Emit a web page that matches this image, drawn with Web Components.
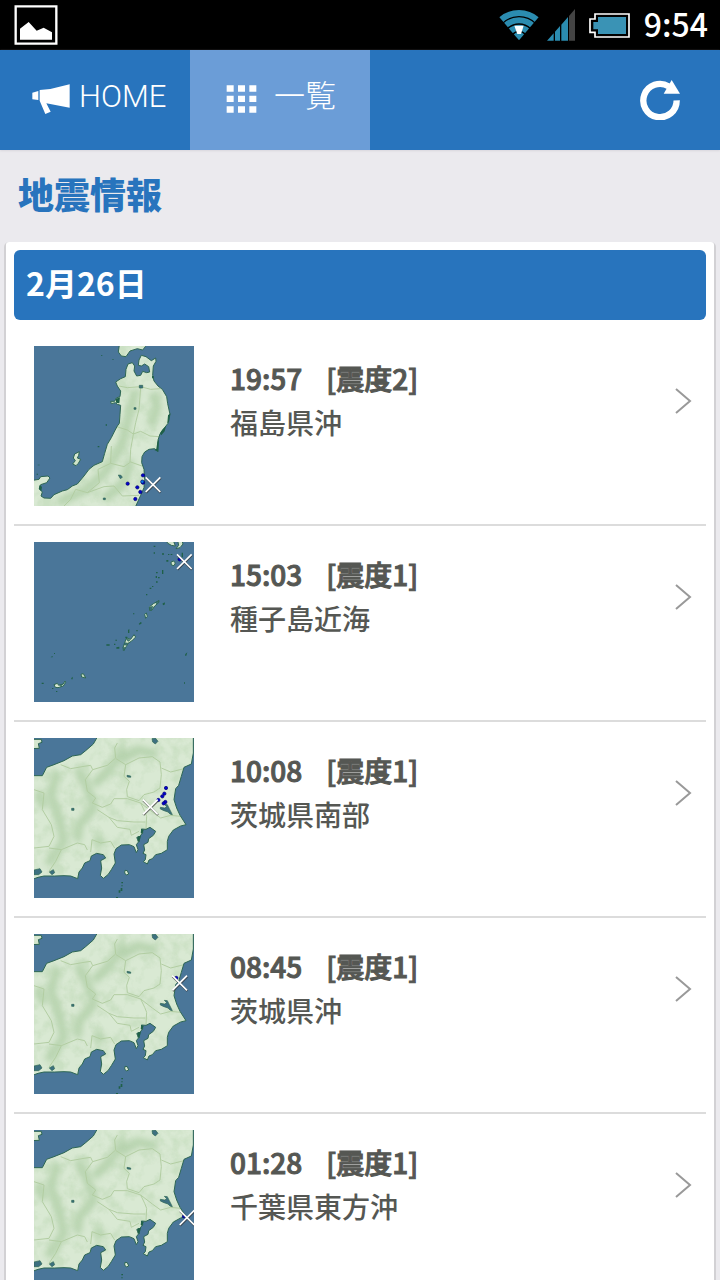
<!DOCTYPE html>
<html lang="ja">
  <head>
    <meta charset="UTF-8" />
    <meta name="viewport" content="width=device-width, initial-scale=1" />
    <title>地震情報</title>
    <style>
      body {
        margin: 0;
        height: 100vh;
        display: flex;
        flex-direction: column;
        background: #ebeaee;
        font-family: "Noto Sans CJK JP", sans-serif;
        color: #555753;
      }
      main {
        flex: 1;
        min-height: 0;
        overflow-y: auto;
        scrollbar-width: none;
      }
      h1 {
        margin: 0;
        padding: 0 18px 6px;
        font-size: 36px;
        line-height: 86px;
        font-weight: 900;
        color: #2874bd;
      }
    </style>
  </head>
  <body>
    <status-bar>9:54</status-bar>
    <tool-bar>
      <nav-tab href="#home" icon="horn">HOME</nav-tab>
      <nav-tab href="#list" icon="grid" active>一覧</nav-tab>
    </tool-bar>
    <main>
      <h1>地震情報</h1>
      <quake-day id="day">
        <span slot="date">2月26日</span>
      </quake-day>
    </main>

    <template id="status-bar-template">
      <style>
        :host {
          display: flex;
          align-items: center;
          justify-content: space-between;
          flex: none;
          height: 50px;
          padding: 0 12px 0 14px;
          background: #000;
          color: #fff;
          font-size: 32px;
          line-height: 48px;
          font-weight: 500;
        }
        div {
          display: flex;
          align-items: center;
          gap: 14px;
        }
        .signals {
          gap: 8px;
        }
        .clock {
          padding-bottom: 4px;
        }
        svg {
          display: block;
        }
      </style>
      <svg width="44" height="40" viewBox="42 15 132 120">
        <path fill="none" stroke="#fff" stroke-width="7" d="M47 19H169V131H47Z" />
        <path fill="#fff" d="M60 119V86L86 66L110 92L131 83L156 97V119Z" />
      </svg>
      <div>
        <div class="signals">
          <svg width="40" height="32" viewBox="58 27 120 96">
            <clipPath id="fan"><path d="M118 121L56 48V20H180V48Z" /></clipPath>
            <g clip-path="url(#fan)" fill="none" stroke="#2b8cb0" stroke-width="18">
              <circle cx="118" cy="121" r="82" />
              <circle cx="118" cy="121" r="60" />
              <circle cx="118" cy="121" r="38" />
              <circle cx="118" cy="121" r="12" stroke-width="24" />
            </g>
            <path fill="#fff" d="M104 77H132L124 102H113Z" />
          </svg>
          <svg width="28" height="32" viewBox="204 27 84 96">
            <path fill="#2b8cb0" d="M204 122L224 100V122ZM228 122V95L243 78V122ZM247 122V74L267 51V122Z" />
            <path fill="#444" d="M270 122V48L288 27V122Z" />
          </svg>
        </div>
        <svg width="41" height="25" viewBox="327 36 123 75">
          <path fill="none" stroke="#fff" stroke-width="5" d="M345 39H447V108H345V94H330V54H345Z" />
          <path fill="#3a93b5" d="M354 48H438V99H354V85H340V63H354Z" />
        </svg>
        <span class="clock"><slot></slot></span>
      </div>
    </template>

    <template id="tool-bar-template">
      <style>
        :host {
          display: flex;
          flex: none;
          height: 100px;
          background: #2874bd;
          box-shadow: 0 1px 2px #d8d6dc;
        }
        nav {
          display: flex;
          flex: 1;
        }
        button {
          width: 120px;
          padding: 0;
          border: 0;
          background: none;
        }
        svg {
          display: block;
          margin: auto;
        }
      </style>
      <nav><slot></slot></nav>
      <button type="button" aria-label="更新">
        <svg width="40" height="40" viewBox="480 237 120 120">
          <path fill="none" stroke="#fff" stroke-width="19" d="M590 298A50 50 0 1 1 566 256" />
          <path fill="#fff" d="M575 237L600 278H551Z" />
        </svg>
      </button>
    </template>

    <template id="nav-tab-template">
      <style>
        :host {
          display: block;
        }
        a {
          box-sizing: border-box;
          display: flex;
          align-items: center;
          height: 100%;
          width: 190px;
          padding: 0 0 2px 31px;
          gap: 8px;
          color: #fff;
          text-decoration: none;
          font-family: Roboto, "Noto Sans CJK JP", sans-serif;
          font-size: 31px;
          font-weight: 300;
          line-height: 40px;
        }
        :host([active]) a {
          width: 180px;
          padding-left: 36px;
          gap: 16px;
          background: #6b9dd7;
        }
        #text {
          padding-bottom: 4px;
        }
      </style>
      <a><span id="icon"></span><span id="text"><slot></slot></span></a>
    </template>

    <template id="quake-day-template">
      <style>
        :host {
          display: block;
          margin: 0 6px;
          padding: 8px 8px 0;
          background: #fff;
          border-radius: 3px;
          box-shadow: 0 2px 0 2px #d2d1d4;
        }
        h2 {
          margin: 0 0 10px;
          padding: 0 12px 6px;
          border-radius: 6px;
          background: #2874bd;
          color: #fff;
          font-size: 32px;
          line-height: 64px;
          font-weight: 700;
        }
      </style>
      <h2><slot name="date"></slot></h2>
      <slot></slot>
    </template>

    <template id="quake-item-template">
      <style>
        :host {
          display: block;
          border-bottom: 2px solid #dcdcdc;
        }
        a {
          display: flex;
          align-items: flex-start;
          gap: 36px;
          padding: 16px 14px 18px 20px;
          color: inherit;
          text-decoration: none;
          font-size: 28px;
          line-height: 44px;
        }
        .text {
          flex: 1;
          padding-top: 10px;
        }
        .head {
          display: flex;
          gap: 24px;
          -webkit-text-stroke: 1px;
          font-weight: 500;
        }
        .place {
          font-weight: 500;
        }
        svg {
          display: block;
          padding-top: 42px;
        }
      </style>
      <a href="#detail">
        <slot name="map"></slot>
        <div class="text">
          <div class="head">
            <slot name="time"></slot>
            <span>[<slot name="scale"></slot>]</span>
          </div>
          <div class="place"><slot name="place"></slot></div>
        </div>
        <svg width="17" height="26" viewBox="0 0 17 26">
          <path fill="none" stroke="#999" stroke-width="2" d="M1 1L15 13L1 25" />
        </svg>
      </a>
    </template>

    <template id="quake-map-template">
      <style>
        :host {
          display: block;
          flex: none;
          width: 160px;
          height: 160px;
        }
        svg {
          display: block;
        }
      </style>
      <svg width="160" height="160" viewBox="30 30 480 480">
        <filter id="soft" x="-20%" y="-20%" width="140%" height="140%">
          <feGaussianBlur stdDeviation="9" />
        </filter>
        <filter id="grain" x="0" y="0" width="100%" height="100%">
          <feTurbulence type="fractalNoise" baseFrequency="0.025" numOctaves="4" seed="5" />
          <feColorMatrix values="0 0 0 0 .5  0 0 0 0 .68  0 0 0 0 .45  0 0 0 3 -1.35" />
        </filter>
        <rect x="30" y="30" width="480" height="480" fill="#4a7699" />
        <g id="region"></g>
        <g id="dots" fill="#0000d0" stroke="#00006a" stroke-width="2"></g>
        <g id="cross" fill="none"></g>
      </svg>
    </template>

    <script>
      const icons = {
        horn: `<svg width="40" height="32" viewBox="92 252 120 96" style="display:block">
          <path fill="#fff" d="M96 281L114 276V303L96 301ZM118 273L150 270L208 256V326L138 313L151 338L135 345L118 305Z"/></svg>`,
        grid: `<svg width="32" height="30" viewBox="680 254 96 90" style="display:block">
          <path fill="#fff" d="M682 258h21v19h-21zM716 258h21v19h-21zM750 258h21v19h-21zM682 289h21v19h-21zM716 289h21v19h-21zM750 289h21v19h-21zM682 321h21v19h-21zM716 321h21v19h-21zM750 321h21v19h-21z"/></svg>`,
      };

      // land: coastline, hills: darker relief, lines: prefecture borders, water: lakes
      const regions = {
        tohoku: {
          land: `M20 520V434L45 430L50 422L72 420L78 426L68 440L50 446L46 458L55 468L51 480L60 486L80 487L90 476L115 465L130 461L145 450L160 444L180 420L195 400L210 388L235 377L242 352L250 325L262 305L272 285L280 270L286 262L288 235L290 208L280 205L274 200L262 203L260 196L272 196L277 186L288 182L290 165L280 150L275 138L290 128L304 122L306 100L312 84L325 80L332 90L330 105L338 120L350 118L356 106L368 110L377 108L374 92L362 84L352 90L343 88L345 72L352 58L366 62L382 74L395 66L396 76L388 90L386 118L390 135L402 150L415 160L428 182L431 203L438 235L432 262L418 280L408 294L402 312L401 346L392 338L375 340L362 348L354 362L353 380L360 400L362 430L360 455L350 478L331 520Z
            M287 20L283 48L292 60L306 62L318 45L340 38L356 42L364 32L370 20Z
            M152 354L166 347L164 358L160 366L170 370L163 382L156 389L146 384L154 374L148 366Z`,
          hills: "M335 160L312 250L292 330L250 400L190 460L100 500M385 170L400 210L380 270M320 370L300 440L240 490",
          lines: "M285 150L310 155L350 152L380 160L408 158M350 155L345 220L335 260L328 295L320 340L318 378M278 272L310 282L328 294L350 286L378 300L405 302M262 330L260 382L300 392L320 378L354 390M260 382L222 400L226 440L190 470L155 460L140 490L120 510M190 470L240 452L270 450L295 480L345 478",
          water: "M346 148h10v8h-10zM330 215h6v5h-6zM283 417l8 1l4 6l-6 4zM238 486h6v5h-6z",
          specks: "M231 57h4v2h-4zM265 70h4v2h-4zM245 265h4v4h-4zM221 330h5v4h-5zM41 386h6v2h-6zM38 413h4v3h-4zM384 120h5v7h-5zM276 188l12 -4l-2 18l-10 -2zM400 318l5 -8l-2 38l-12 -6l6 -4zM408 292l6 -10l12 -12l-4 16l-10 12zM432 238l7 -6l-4 26l-5 4zM46 448l8 4l-2 14l-7 -6z",
        },
        nansei: {
          land: `M427 20L430 33L442 40L454 42L446 20ZM460 20L464 40L456 50L468 47L477 36L472 20Z
            M441 90L449 87L454 93L450 101L442 99Z
            M376 225L388 215L405 206L404 212L392 222L384 234L377 235Z
            M362 247L367 243L370 253L365 259ZM300 355L297 347L302 332L308 318L320 322L330 308L335 315L323 327L312 334L307 343Z
            M171 427L178 425L185 438L173 435ZM90 458L100 454L104 460L118 456L123 447L125 451L118 462L102 467L94 466Z`,
          hills: "",
          lines: "",
          water: "M378 226l8 -3l-3 12h-6zM396 210l9 -4l-2 7l-6 3zM298 346l5 1l-2 8h-4zM302 332l10 2l-5 5h-6zM308 322l10 2l-6 4zM108 458l8 -1l-6 6z",
          specks: `M389 41h5v4h-5zM389 61h4v4h-4zM414 64h6v4h-6zM432 66h4v3h-4zM440 66h5v3h-5zM473 62h4v14h-4zM427 84h6v5h-6zM414 114h4v12h-4zM396 120h5v4h-5zM402 135h5v4h-5zM395 132h4v6h-4zM396 148h5v4h-5zM384 162h4v3h-4zM377 167h5v4h-5zM366 186h4v4h-4zM415 215l7 -4l1 6l-5 3zM327 244h4v3h-4zM344 276l6 -6l4 3l-7 5zM337 294h4v4h-4zM312 294l4 -3v12h-4zM304 314h6v5h-6zM274 323h5v3h-5zM247 337h10v4h-10zM270 335h4v4h-4zM277 346l9 -2v6h-9zM90 363h3v3h-3zM80 375l6 -3v4h-5zM53 452h6v4h-6zM142 438l4 -4v8h-4zM96 477h4v3h-4zM84 468h4v3h-4zM484 366l6 -5l-3 10h-4zM480 451h3v4h-3z`,
        },
        kanto: {
          land: `M224 20H508V75L502 108L480 118L472 145L464 172L455 182L450 215L458 240L468 262L486 290L470 294L448 306L434 325L430 340V365L412 376L395 380L385 392L375 396L370 408L358 401L364 395L366 380L357 376L362 366L359 350L372 343L374 332L388 322L395 310L378 298L366 304L352 303L356 314L348 325L338 329L345 340L337 350L342 365L337 374L330 356L316 350L292 351L276 362L270 378L274 405L262 425L252 440L238 451L229 442L233 420L230 398L245 390L238 380L218 376L202 384L198 398L182 405L175 420L165 432L161 452L140 444L120 443L92 444L60 444L42 448L20 456V143L55 143L68 118L90 110L120 98L145 84L170 80L185 68L208 48Z
            M20 34L52 34L54 43L43 47L46 61L20 62ZM303 427L310 428L314 438L307 441L302 435Z`,
          hills: "M100 130L80 200L105 270L120 340L70 410M160 120L190 180L210 240L165 290L160 340M300 60L260 120L210 170M290 100L340 65L400 80M40 190L60 240M215 330L240 350",
          lines: "M110 110L140 122L180 115L200 112L206 125L250 112L275 90L272 60L280 45M276 92L305 110L345 90L385 86L408 102L412 140L408 180L390 192L360 200L345 218L310 206L308 184L316 160L300 145L305 110M412 120L440 132L480 122M206 125L184 155L190 190L215 210L205 225L235 238L260 228L270 212L310 212L350 225L362 250L368 265L366 302M350 225L385 252L410 270L440 262L470 265M220 245L255 268L280 278L330 282L364 282M255 268L280 298L318 304L322 322L345 310M30 185L60 195L55 245L82 290L90 325L75 355L30 360M75 360L112 365L95 400L75 430M112 365L160 345L182 350L190 366M200 372L204 335L230 345L260 340L272 360",
          water: "M384 32L394 30L402 40L394 48L386 42ZM309 142L320 144L320 148L310 147ZM143 241h7v6h-7zM409 238L422 240L428 236L421 229L430 230L436 242L445 260L438 258L432 252L420 248L409 243ZM30 426L48 422L54 432L44 440L30 440ZM76 432L88 425L92 434L84 440Z",
          specks: "M292 462h5v4h-5zM292 472h4v3h-4zM290 480h5v9h-5zM284 487h5v7h-5zM276 507h6v3h-6zM341 325l10 -1l-5 18l-6 -2zM352 303l7 3l-4 12l-5 -4z",
        },
      };

      const quakes = [
        { time: "19:57", scale: "震度2", place: "福島県沖", region: "tohoku", cross: [387, 446],
          dots: [[311, 443], [340, 454], [349, 468], [334, 489], [357, 418], [357, 440], [355, 437, "#0878e8"]] },
        { time: "15:03", scale: "震度1", place: "種子島近海", region: "nansei", cross: [481, 89],
          dots: [[467, 82]] },
        { time: "10:08", scale: "震度1", place: "茨城県南部", region: "kanto", cross: [379, 237],
          dots: [[426, 180], [421, 197], [415, 205], [403, 216], [424, 222], [419, 226]] },
        { time: "08:45", scale: "震度1", place: "茨城県沖", region: "kanto", cross: [467, 177],
          dots: [[457, 162]] },
        { time: "01:28", scale: "震度1", place: "千葉県東方沖", region: "kanto", cross: [489, 293],
          dots: [[480, 289]] },
      ];

      class TemplateElement extends HTMLElement {
        constructor() {
          super();
          const template = document.getElementById(this.localName + "-template");
          const shadow = this.attachShadow({ mode: "open" });
          shadow.appendChild(template.content.cloneNode(true));
        }
      }

      class StatusBar extends TemplateElement {}
      customElements.define("status-bar", StatusBar);

      class ToolBar extends TemplateElement {}
      customElements.define("tool-bar", ToolBar);

      class NavTab extends TemplateElement {
        connectedCallback() {
          this.shadowRoot.querySelector("a").href = this.getAttribute("href");
          this.shadowRoot.getElementById("icon").innerHTML = icons[this.getAttribute("icon")];
        }
      }
      customElements.define("nav-tab", NavTab);

      class QuakeMap extends TemplateElement {
        show(quake) {
          const r = regions[quake.region];
          const root = this.shadowRoot;
          root.getElementById("region").innerHTML = `
            <clipPath id="coast"><path d="${r.land}"/></clipPath>
            <path d="${r.land}" fill="#d9e9d3"/>
            <g clip-path="url(#coast)">
              <path d="${r.hills}" fill="none" stroke="#a0c596" stroke-width="26" opacity=".6" filter="url(#soft)"/>
              <rect x="30" y="30" width="480" height="480" filter="url(#grain)" opacity=".5"/>
              <path d="${r.lines}" fill="none" stroke="#b2cda2" stroke-width="3" stroke-linejoin="round"/>
            </g>
            <path d="${r.land}" fill="none" stroke="#2d6653" stroke-width="3"/>
            <path d="${r.water}" fill="#3d7080" stroke="#2d6653" stroke-width="2"/>
            <path d="${r.specks}" fill="#1f6048"/>`;
          root.getElementById("dots").innerHTML = quake.dots
            .map(([x, y, fill]) => `<circle cx="${x}" cy="${y}" r="5" ${fill ? `fill="${fill}"` : ""}/>`)
            .join("");
          const [x, y] = quake.cross;
          const d = `M${x - 22} ${y - 22}L${x + 22} ${y + 22}M${x + 22} ${y - 22}L${x - 22} ${y + 22}`;
          root.getElementById("cross").innerHTML = `
            <path d="${d}" stroke="#333" stroke-width="7" opacity=".7" transform="translate(1 2)"/>
            <path d="${d}" stroke="#fff" stroke-width="5"/>`;
        }
      }
      customElements.define("quake-map", QuakeMap);

      class QuakeItem extends TemplateElement {}
      customElements.define("quake-item", QuakeItem);

      class QuakeDay extends TemplateElement {
        addQuake(quake) {
          const item = document.createElement("quake-item");
          const map = document.createElement("quake-map");
          map.slot = "map";
          map.show(quake);
          item.appendChild(map);

          for (const key of ["time", "scale", "place"]) {
            const span = document.createElement("span");
            span.slot = key;
            span.textContent = quake[key];
            item.appendChild(span);
          }
          this.appendChild(item);
        }
      }
      customElements.define("quake-day", QuakeDay);

      const day = document.getElementById("day");
      quakes.forEach((quake) => day.addQuake(quake));
    </script>
  </body>
</html>
